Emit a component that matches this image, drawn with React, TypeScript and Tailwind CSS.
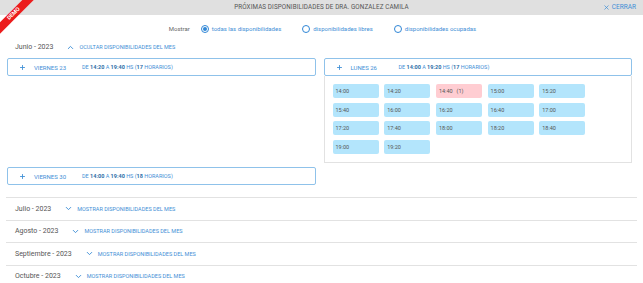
import { X, Plus, ChevronUp, ChevronDown } from "lucide-react";

const lunesSlots: { time: string; busy?: number }[] = [
  { time: "14:00" },
  { time: "14:20" },
  { time: "14:40", busy: 1 },
  { time: "15:00" },
  { time: "15:20" },
  { time: "15:40" },
  { time: "16:00" },
  { time: "16:20" },
  { time: "16:40" },
  { time: "17:00" },
  { time: "17:20" },
  { time: "17:40" },
  { time: "18:00" },
  { time: "18:20" },
  { time: "18:40" },
  { time: "19:00" },
  { time: "19:20" },
];

const otherMonths = [
  { label: "Julio - 2023" },
  { label: "Agosto - 2023" },
  { label: "Septiembre - 2023" },
  { label: "Octubre - 2023" },
];

function Radio({ checked, label }: { checked?: boolean; label: string }) {
  return (
    <label className="flex items-center gap-[3px]">
      <span className="flex h-[8px] w-[8px] items-center justify-center rounded-full border border-[#2f86d6]">
        {checked && <span className="h-[4px] w-[4px] rounded-full bg-[#2f86d6]" />}
      </span>
      <span className="text-[6px] text-[#3f8fd6]">{label}</span>
    </label>
  );
}

function DayHeader({ day, from, to, count }: { day: string; from: string; to: string; count: number }) {
  return (
    <div className="flex h-[18px] items-center rounded-[2px] border border-[#8fc2ea] pl-[11px] text-[5.5px] text-[#3f8fd6]">
      <Plus className="h-[7px] w-[7px]" strokeWidth={3} />
      <span className="ml-[8px] w-[48px] text-[6px]">{day}</span>
      <span>
        DE <b className="text-[#2f6fa8]">{from}</b> A <b className="text-[#2f6fa8]">{to}</b> HS (
        <b className="text-[#2f6fa8]">{count}</b> HORARIOS)
      </span>
    </div>
  );
}

export default function App() {
  return (
    <div className="relative h-[283px] w-[643px] overflow-hidden bg-white font-['Roboto',sans-serif]">
      {/* cinta demo */}
      <div className="absolute left-[-16px] top-[10px] z-10 flex h-[8px] w-[60px] -rotate-45 items-center justify-center bg-[#ec1c1c] text-[5.5px] font-bold leading-none text-white">
        DEMO
      </div>

      <div className="grid h-[15px] grid-cols-[1fr_auto_1fr] items-center bg-[#e0e0e0]">
        <div />
        <div className="text-[6.3px] tracking-[0.1px] text-[#555]">PRÓXIMAS DISPONIBILIDADES DE DRA. GONZALEZ CAMILA</div>
        <div className="flex justify-end pr-[7px]">
          <button className="flex items-center gap-[2px] text-[6.5px] text-[#3f8fd6]">
            <X className="h-[7px] w-[7px]" strokeWidth={2.5} />
            CERRAR
          </button>
        </div>
      </div>

      <div className="mt-[9px] flex items-center justify-center gap-[21px] pl-[2px]">
        <span className="-mr-[10px] text-[6px] text-[#666]">Mostrar</span>
        <Radio checked label="todas las disponibilidades" />
        <Radio label="disponibilidades libres" />
        <Radio label="disponibilidades ocupadas" />
      </div>

      <div className="px-[6px]">
        <div className="mt-[7px] flex h-[14px] items-center pl-[9px]">
          <span className="text-[7px] text-[#555]">Junio - 2023</span>
          <ChevronUp className="ml-[13px] h-[9px] w-[9px] text-[#3f8fd6]" strokeWidth={2.5} />
          <span className="ml-[4px] text-[5.5px] text-[#3f8fd6]">OCULTAR DISPONIBILIDADES DEL MES</span>
        </div>

        <div className="ml-[1px] mt-[4px] grid w-[625px] grid-cols-2 items-start gap-x-[8px] gap-y-[4px]">
          <DayHeader day="VIERNES 23" from="14:20" to="19:40" count={17} />
          <div>
            <DayHeader day="LUNES 26" from="14:00" to="19:20" count={17} />
            <div className="grid grid-cols-[repeat(5,46px)] gap-x-[5.7px] gap-y-[4.7px] border border-t-0 border-[#e2e2e2] px-[8px] pb-[8px] pt-[8px]">
              {lunesSlots.map((s) => (
                <div
                  key={s.time}
                  className={`flex h-[14px] items-center rounded-[2px] pl-[3px] text-[5.5px] text-[#555] ${
                    s.busy ? "bg-[#ffcdd2]" : "bg-[#b3e5fc]"
                  }`}
                >
                  {s.time}
                  {s.busy && <span className="ml-[4px]">({s.busy})</span>}
                </div>
              ))}
            </div>
          </div>
          <DayHeader day="VIERNES 30" from="14:00" to="19:40" count={18} />
        </div>

        <div className="mt-[12px]">
          {otherMonths.map((m) => (
            <div key={m.label} className="flex h-[22.5px] items-center border-t border-[#e2e2e2] pl-[9px]">
              <span className="text-[7px] text-[#555]">{m.label}</span>
              <ChevronDown className="ml-[13px] h-[9px] w-[9px] text-[#3f8fd6]" strokeWidth={2.5} />
              <span className="ml-[4px] text-[5.5px] text-[#3f8fd6]">MOSTRAR DISPONIBILIDADES DEL MES</span>
            </div>
          ))}
        </div>
      </div>
    </div>
  );
}
